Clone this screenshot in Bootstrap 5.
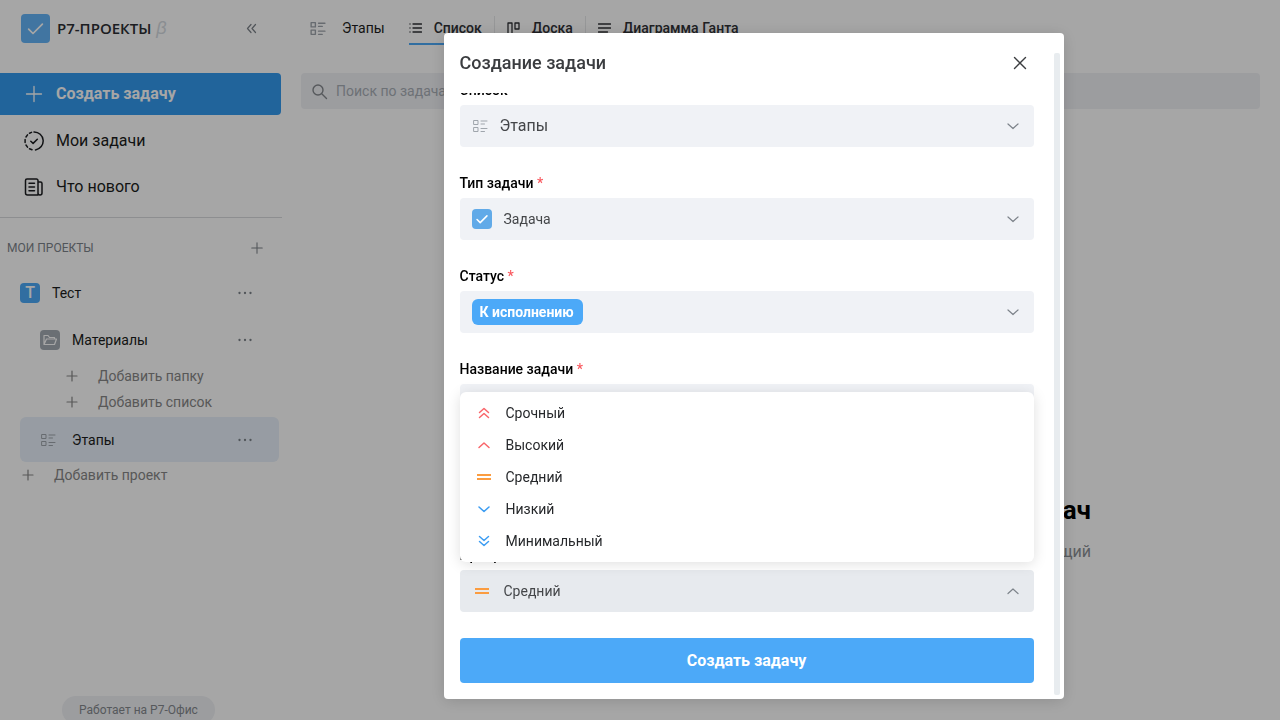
<!DOCTYPE html>
<html lang="ru">
<head>
<meta charset="utf-8">
<meta name="viewport" content="width=device-width, initial-scale=1">
<title>Р7-Проекты</title>
<link href="https://cdn.jsdelivr.net/npm/bootstrap@5.3.0/dist/css/bootstrap.min.css" rel="stylesheet">
<style>
  body { font-family: Roboto, "Noto Sans", sans-serif; font-size: 14px; line-height: 20px; color: #1b1d20; background: #fff; }
  svg { flex: none; fill: none; stroke: currentColor; stroke-linecap: round; stroke-linejoin: round; }
  a { color: inherit; text-decoration: none; }
  button { font: inherit; color: inherit; }
  .app { height: 100vh; }
  .plain { background: none; border: 0; padding: 0; }
  .muted { color: #7d838a; }
  .soft { color: #9fa5ac; }

  /* sidebar */
  .side { width: 282px; flex: none; }
  .brand { height: 56px; margin-bottom: 17px; padding-left: 21px; padding-right: 24px; }
  .logo { width: 29px; height: 29px; border-radius: 4px; background: #64b4f7; color: #fff; }
  .brand-name { font: 600 15px/20px "Open Sans", sans-serif; color: #2c2e33; margin-left: 7px; }
  .beta { font: italic 18px/20px "Liberation Sans", sans-serif; color: #d5dae0; margin-left: 5px; }
  .create { height: 42px; margin-right: 1px; padding-left: 24px; gap: 12px; border-radius: 0 4px 4px 0; background: #349aee; color: #fff; font-size: 16px; font-weight: 700; margin-bottom: 3px; }
  .menu-link { height: 46px; padding-left: 24px; gap: 12px; font-size: 16px; }
  .side-rule { border-top: 1px solid #d9dbde; margin-top: 7px; }
  .section-head { height: 51px; font-size: 12px; padding: 8px 18px 0 7px; }
  .tree-row { height: 47px; padding-right: 29px; }
  .tree-row a { gap: 12px; }
  .tile { width: 20px; height: 20px; border-radius: 4px; color: #fff; }
  .tile-blue { background: #4ca9f8; font-size: 16px; font-weight: 500; }
  .tile-gray { background: #a3abb3; }
  .tile-task { background: #61aae8; }
  .add { height: 26px; gap: 18px; color: #878787; }
  .selected { height: 45px; margin: 2px 3px 0 20px; padding-left: 20px; padding-right: 26px; border-radius: 6px; background: #e8f0fa; }
  .powered { height: 28px; padding: 4px 17px; border-radius: 14px; background: #f0f1f5; color: #85898e; font-size: 12px; margin: auto auto -4px 62px; }

  /* workspace */
  .tabs { height: 56px; padding-left: 27px; }
  .tab { height: 34px; gap: 12px; padding: 0 12px; font-weight: 500; color: #2f3135; }
  .tab.current { box-shadow: inset 0 -2px #4ca9f8; padding: 0; margin-right: 12px; }
  .tabs .vr { height: 24px; align-self: center; color: #9fa5ac; }
  .search { height: 36px; margin: 17px 20px 0 19px; padding: 0 10px; gap: 8px; border-radius: 4px; background: #f0f1f5; color: #85898e; }
  .search input { background: none; border: 0; outline: 0; padding: 0; color: inherit; }
  .search input::placeholder { color: #a8aeb5; }
  .empty { padding: 385px 189px 0 0; text-align: right; }
  .empty h2 { font-size: 26px; line-height: 32px; font-weight: 700; color: #000; margin-bottom: 16px; }
  .empty p { font-size: 16px; color: #8b8f94; }

  /* dialog */
  .shade { background: rgba(0, 0, 0, .35); }
  .task-shift { padding-left: 227px; }
  .modal-dialog.task { max-width: 620px; height: calc(100vh - 54px); margin: 33px auto 21px; }
  .modal-content { border: 0; border-radius: 4px; color: #000; box-shadow: 0 2px 16px rgba(0, 0, 0, .15); }
  .modal-header, .modal-footer { border: 0; }
  .modal-header { height: 60px; padding: 0 36px 0 16px; color: #3b3d40; }
  .modal-title { font-size: 18px; line-height: 24px; font-weight: 500; }
  .form-area { min-height: 0; padding: 0 30px 0 16px; }
  .form-area > .group { flex: none; margin-bottom: 26px; }
  .group label { display: block; font-weight: 500; margin-bottom: 5px; }
  .req { color: #f9595f; }
  .box { height: 42px; padding: 0 13px 0 12px; border-radius: 4px; background: #f0f2f6; }
  .box.open { background: #e7eaee; }
  .box select, .box input { appearance: none; border: 0; outline: 0; background: none; padding: 0; line-height: 20px; color: #444649; min-width: 0; }
  .box .caret { margin-left: auto; color: #7d838a; }
  .box select.pill { height: 26px; padding: 0 8px; border-radius: 6px; background: #4ca9f8; color: #fff; font-weight: 700; }
  .choices { left: 0; right: 0; bottom: 50px; padding: 5px 0; background: #fff; border-radius: 6px; box-shadow: 0 2px 14px rgba(0, 0, 0, .13); }
  .choices button { height: 32px; padding-left: 16px; gap: 14px; color: #26282b; }
  .c-red { color: #f9656a; } .c-orange { color: #fb9c40; } .c-blue { color: #3b9cf2; }
  .modal-footer { padding: 0 30px 16px 16px; }
  .submit { height: 45px; border-radius: 4px; background: #4ca9f8; color: #fff; font-size: 16px; font-weight: 700; }
  .scroll-rail { width: 6px; top: 20px; bottom: 4px; right: 4px; border-radius: 2px; background: #e8ecef; }
</style>
</head>
<body class="overflow-hidden">

<svg class="d-none" aria-hidden="true">
  <symbol id="i-plus" viewBox="0 0 20 20"><path d="M10 2.500v15M2.500 10h15"/></symbol>
  <symbol id="i-plus-s" viewBox="0 0 16 16"><path d="M8 3v10M3 8h10"/></symbol>
  <symbol id="i-list" viewBox="0 0 16 16"><path d="M2 2.500h4v4H2zM2 9.500h4v4H2zM9 3h6M9 6h3.500M9 10.500h6M9 13.500h3.500"/></symbol>
  <symbol id="i-check" viewBox="0 0 20 20"><path d="M4.500 10.500l3.500 3.500 7.500-7.500"/></symbol>
  <symbol id="i-down" viewBox="0 0 16 16"><path d="M3 6l5 4.500L13 6"/></symbol>
  <symbol id="i-up" viewBox="0 0 16 16"><path d="M3 10.500L8 6l5 4.500"/></symbol>
  <symbol id="i-down2" viewBox="0 0 16 16"><path d="M3.500 3.500L8 7.500l4.500-4M3.500 8.500l4.500 4 4.500-4"/></symbol>
  <symbol id="i-up2" viewBox="0 0 16 16"><path d="M3.500 7.500l4.500-4 4.500 4M3.500 12.500l4.500-4 4.500 4"/></symbol>
  <symbol id="i-equal" viewBox="0 0 16 16"><path d="M1 6h14M1 10h14" stroke-linecap="butt"/></symbol>
  <symbol id="i-dots" viewBox="0 0 16 16"><path d="M2.500 8h.01M8 8h.01M13.500 8h.01"/></symbol>
</svg>

<div class="app d-flex">
  <aside class="side d-flex flex-column">
    <div class="brand d-flex align-items-center">
      <span class="logo d-flex"><svg class="m-auto" width="25" height="25" stroke-width="1.400"><use href="#i-check"/></svg></span>
      <span class="brand-name">Р7-ПРОЕКТЫ</span><span class="beta">β</span>
      <button class="plain muted ms-auto d-flex" type="button" aria-label="Свернуть">
        <svg width="13" height="13" viewBox="0 0 13 13" stroke-width="1.200"><path d="M6 2.500L2.500 6.500 6 10.500M10.500 2.500L7 6.500l3.500 4"/></svg>
      </button>
    </div>
    <button class="create plain d-flex align-items-center" type="button">
      <svg width="20" height="20" stroke-width="1.300"><use href="#i-plus"/></svg>Создать задачу
    </button>
    <nav>
      <a class="menu-link d-flex align-items-center" href="#">
        <svg width="20" height="20" viewBox="0 0 20 20" stroke-width="1.500"><path d="M10 1a9 9 0 0 1 1.500 17.900M8 18.800l-2.500-1M3.500 16.200L2 14M1.100 11.500V8.500M2 6l1.500-2.200M5.500 2.200L7.500 1.400M6.800 10.200l2.300 2.200 4.200-4.200"/></svg>Мои задачи
      </a>
      <a class="menu-link d-flex align-items-center" href="#">
        <svg width="20" height="20" viewBox="0 0 20 20" stroke-width="1.500"><path d="M3 2h9.500a1.500 1.500 0 0 1 1.500 1.500V18H3.500A2 2 0 0 1 1.500 16V3.500A1.500 1.500 0 0 1 3 2zM14 5h2.500A1.500 1.500 0 0 1 18 6.500V16a2 2 0 0 1-4 0M5 6.200h5.500M5 10h5.500M5 13.800h5.500"/></svg>Что нового
      </a>
    </nav>
    <div class="side-rule"></div>
    <div class="section-head muted d-flex align-items-center justify-content-between">
      МОИ ПРОЕКТЫ
      <button class="plain d-flex" type="button" aria-label="Новый проект"><svg width="14" height="14" stroke-width="1.500"><use href="#i-plus"/></svg></button>
    </div>
    <div class="tree-row d-flex align-items-center justify-content-between">
      <a class="d-flex align-items-center ps-3 ms-1" href="#"><span class="tile tile-blue d-flex align-items-center justify-content-center">Т</span>Тест</a>
      <button class="plain muted d-flex" type="button" aria-label="Ещё"><svg width="16" height="16" stroke-width="2.300"><use href="#i-dots"/></svg></button>
    </div>
    <div class="tree-row d-flex align-items-center justify-content-between">
      <a class="d-flex align-items-center ps-3 ms-4" href="#"><span class="tile tile-gray d-flex"><svg class="m-auto" width="16" height="16" viewBox="0 0 16 16" stroke-width="1.200"><path d="M2 12.500v-9h4l1.500 2h5V7M2 12.500L4.500 7H14.500l-2 5.500z"/></svg></span>Материалы</a>
      <button class="plain muted d-flex" type="button" aria-label="Ещё"><svg width="16" height="16" stroke-width="2.300"><use href="#i-dots"/></svg></button>
    </div>
    <button class="add plain d-flex align-items-center ps-5 ms-3" type="button"><svg width="16" height="16" stroke-width="1.200"><use href="#i-plus-s"/></svg>Добавить папку</button>
    <button class="add plain d-flex align-items-center ps-5 ms-3" type="button"><svg width="16" height="16" stroke-width="1.200"><use href="#i-plus-s"/></svg>Добавить список</button>
    <div class="selected d-flex align-items-center justify-content-between">
      <a class="d-flex align-items-center gap-3" href="#"><svg class="soft" width="16" height="16"><use href="#i-list"/></svg>Этапы</a>
      <button class="plain muted d-flex" type="button" aria-label="Ещё"><svg width="16" height="16" stroke-width="2.300"><use href="#i-dots"/></svg></button>
    </div>
    <button class="add plain d-flex align-items-center ps-3 ms-1" type="button"><svg width="16" height="16" stroke-width="1.200"><use href="#i-plus-s"/></svg>Добавить проект</button>
    <a class="powered text-nowrap" href="#">Работает на Р7-Офис</a>
  </aside>

  <main class="flex-fill">
    <nav class="tabs d-flex align-items-center">
      <span class="d-flex align-items-center gap-3 me-4"><svg class="soft" width="17" height="17" stroke-width="1.300"><use href="#i-list"/></svg>Этапы</span>
      <a class="tab current d-flex align-items-center" href="#"><svg width="13" height="16" viewBox="0 0 13 16" stroke-width="1.300"><path d="M1 4h.01M1 8h.01M1 12h.01M4 4h8.500M4 8h8.500M4 12h8.500"/></svg>Список</a>
      <div class="vr"></div>
      <a class="tab d-flex align-items-center" href="#"><svg width="13" height="16" viewBox="0 0 13 16" stroke-width="1.300"><path d="M1 14V3h4v11M8 3h4v6H8z"/></svg>Доска</a>
      <div class="vr"></div>
      <a class="tab d-flex align-items-center" href="#"><svg width="13" height="16" viewBox="0 0 13 16" stroke-width="1.300"><path d="M.5 4h12M.5 8h12M.5 12h9"/></svg>Диаграмма Ганта</a>
    </nav>
    <div class="search d-flex align-items-center">
      <svg width="17" height="17" viewBox="0 0 17 17" stroke-width="1.400"><circle cx="7" cy="7" r="5"/><path d="M11 11l4.500 4.500"/></svg>
      <input class="flex-fill" type="search" placeholder="Поиск по задачам" aria-label="Поиск по задачам">
    </div>
    <div class="empty">
      <h2>Нет задач</h2>
      <p>Выберите подходящий</p>
    </div>
  </main>
</div>

<div class="modal d-block shade overflow-hidden" tabindex="-1" role="dialog" aria-modal="true" aria-labelledby="taskTitle">
  <div class="task-shift">
  <div class="modal-dialog task">
    <form class="modal-content h-100">
      <div class="modal-header">
        <h1 class="modal-title" id="taskTitle">Создание задачи</h1>
        <button class="plain d-flex" type="button" aria-label="Закрыть"><svg width="16" height="16" viewBox="0 0 16 16" stroke-width="1.400"><path d="M2.500 2.500l11 11M13.500 2.500l-11 11"/></svg></button>
      </div>
      <div class="form-area flex-fill d-flex flex-column justify-content-end overflow-hidden">
        <div class="group">
          <label for="list">Список</label>
          <div class="box d-flex align-items-center">
            <svg class="soft me-2" width="16" height="16"><use href="#i-list"/></svg>
            <select id="list" class="flex-fill fs-6 ms-1"><option>Этапы</option></select>
            <svg class="caret" width="16" height="16" stroke-width="1.200"><use href="#i-down"/></svg>
          </div>
        </div>
        <div class="group">
          <label for="kind">Тип задачи <span class="req">*</span></label>
          <div class="box d-flex align-items-center">
            <span class="tile tile-task d-flex me-2"><svg class="m-auto" width="18" height="18" stroke-width="1.700"><use href="#i-check"/></svg></span>
            <select id="kind" class="flex-fill ms-1"><option>Задача</option></select>
            <svg class="caret" width="16" height="16" stroke-width="1.200"><use href="#i-down"/></svg>
          </div>
        </div>
        <div class="group">
          <label for="state">Статус <span class="req">*</span></label>
          <div class="box d-flex align-items-center">
            <select id="state" class="pill"><option>К исполнению</option></select>
            <svg class="caret" width="16" height="16" stroke-width="1.200"><use href="#i-down"/></svg>
          </div>
        </div>
        <div class="group">
          <label for="name">Название задачи <span class="req">*</span></label>
          <div class="box d-flex align-items-center"><input id="name" class="flex-fill" type="text"></div>
        </div>
        <div class="group">
          <label for="owner">Исполнитель</label>
          <div class="box d-flex align-items-center"><input id="owner" class="flex-fill" type="text"></div>
        </div>
        <div class="group">
          <label for="priority">Приоритет</label>
          <div class="position-relative">
            <div class="box open d-flex align-items-center">
              <svg class="c-orange me-2" width="20" height="16" stroke-width="1.800"><use href="#i-equal"/></svg>
              <select id="priority" class="flex-fill ms-1"><option>Средний</option></select>
              <svg class="caret" width="16" height="16" stroke-width="1.200"><use href="#i-up"/></svg>
            </div>
            <div class="choices position-absolute" role="listbox" aria-label="Приоритет">
              <button class="plain w-100 d-flex align-items-center" type="button" role="option"><svg class="c-red" width="16" height="16" stroke-width="1.500"><use href="#i-up2"/></svg>Срочный</button>
              <button class="plain w-100 d-flex align-items-center" type="button" role="option"><svg class="c-red" width="16" height="16" stroke-width="1.500"><use href="#i-up"/></svg>Высокий</button>
              <button class="plain w-100 d-flex align-items-center" type="button" role="option" aria-selected="true"><svg class="c-orange" width="16" height="16" stroke-width="1.800"><use href="#i-equal"/></svg>Средний</button>
              <button class="plain w-100 d-flex align-items-center" type="button" role="option"><svg class="c-blue" width="16" height="16" stroke-width="1.500"><use href="#i-down"/></svg>Низкий</button>
              <button class="plain w-100 d-flex align-items-center" type="button" role="option"><svg class="c-blue" width="16" height="16" stroke-width="1.500"><use href="#i-down2"/></svg>Минимальный</button>
            </div>
          </div>
        </div>
      </div>
      <div class="modal-footer">
        <button class="submit plain w-100 m-0" type="submit">Создать задачу</button>
      </div>
      <div class="scroll-rail position-absolute"></div>
    </form>
  </div>
  </div>
</div>

<script src="https://cdn.jsdelivr.net/npm/bootstrap@5.3.0/dist/js/bootstrap.bundle.min.js"></script>
</body>
</html>
